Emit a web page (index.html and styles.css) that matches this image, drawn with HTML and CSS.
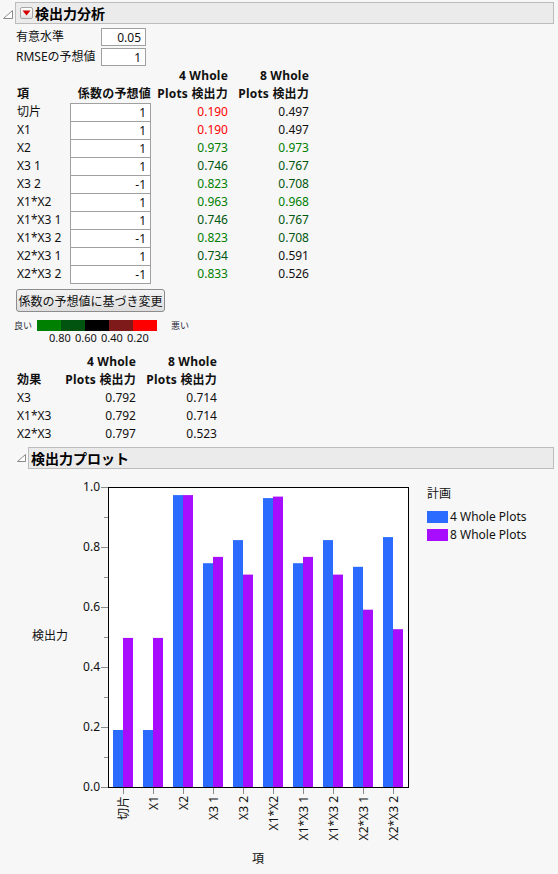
FILE: index.html
```html
<!DOCTYPE html>
<html lang="ja">
<head>
    <meta charset="UTF-8">
    <meta name="viewport" content="width=device-width, initial-scale=1.0">
    <title>検出力分析</title>
    <link rel="stylesheet" href="styles.css">
</head>
<body>
    <div class="outline-head head-main">
        <svg class="disclosure" width="10" height="9" viewBox="0 0 10 9">
            <path d="M9.5 0.5 V8.5 H0.5 Z" fill="#fff" stroke="#8a8a8a"/>
        </svg>
        <div class="title-bar">
            <span class="menu-btn">
                <svg width="9" height="6" viewBox="0 0 9 6"><path d="M0.5 0.5 H8.5 L4.5 5.5 Z" fill="#d40000"/></svg>
            </span>
            <span class="title">検出力分析</span>
        </div>
    </div>

    <div class="outline-body">
        <div class="param">
            <span class="param-label">有意水準</span>
            <input type="text" class="num-input param-input" value="0.05">
        </div>
        <div class="param">
            <span class="param-label">RMSEの予想値</span>
            <input type="text" class="num-input param-input" value="1">
        </div>

        <div class="power-table">
            <div></div><div></div><div class="th num">4 Whole</div><div class="th num">8 Whole</div>
            <div class="th">項</div><div class="th num">係数の予想値</div><div class="th num">Plots 検出力</div><div class="th num">Plots 検出力</div>

            <div>切片</div><input type="text" class="num-input coef" value="1"><div class="num lvl-5">0.190</div><div class="num lvl-3">0.497</div>
            <div>X1</div><input type="text" class="num-input coef" value="1"><div class="num lvl-5">0.190</div><div class="num lvl-3">0.497</div>
            <div>X2</div><input type="text" class="num-input coef" value="1"><div class="num lvl-1">0.973</div><div class="num lvl-1">0.973</div>
            <div>X3 1</div><input type="text" class="num-input coef" value="1"><div class="num lvl-2">0.746</div><div class="num lvl-2">0.767</div>
            <div>X3 2</div><input type="text" class="num-input coef" value="-1"><div class="num lvl-1">0.823</div><div class="num lvl-2">0.708</div>
            <div>X1*X2</div><input type="text" class="num-input coef" value="1"><div class="num lvl-1">0.963</div><div class="num lvl-1">0.968</div>
            <div>X1*X3 1</div><input type="text" class="num-input coef" value="1"><div class="num lvl-2">0.746</div><div class="num lvl-2">0.767</div>
            <div>X1*X3 2</div><input type="text" class="num-input coef" value="-1"><div class="num lvl-1">0.823</div><div class="num lvl-2">0.708</div>
            <div>X2*X3 1</div><input type="text" class="num-input coef" value="1"><div class="num lvl-2">0.734</div><div class="num lvl-3">0.591</div>
            <div>X2*X3 2</div><input type="text" class="num-input coef" value="-1"><div class="num lvl-1">0.833</div><div class="num lvl-3">0.526</div>
        </div>

        <button type="button" class="update-btn">係数の予想値に基づき変更</button>

        <div class="scale">
            <span class="scale-end">良い</span>
            <div class="scale-bar">
                <span class="seg seg-1"></span><span class="seg seg-2"></span><span class="seg seg-3"></span><span class="seg seg-4"></span><span class="seg seg-5"></span>
            </div>
            <span class="scale-end bad">悪い</span>
        </div>
        <div class="scale-labels">
            <span>0.80</span><span>0.60</span><span>0.40</span><span>0.20</span>
        </div>

        <div class="effect-table">
            <div></div><div class="th num">4 Whole</div><div class="th num">8 Whole</div>
            <div class="th">効果</div><div class="th num">Plots 検出力</div><div class="th num">Plots 検出力</div>
            <div>X3</div><div class="num">0.792</div><div class="num">0.714</div>
            <div>X1*X3</div><div class="num">0.792</div><div class="num">0.714</div>
            <div>X2*X3</div><div class="num">0.797</div><div class="num">0.523</div>
        </div>
    </div>

    <div class="outline-head head-sub">
        <svg class="disclosure" width="9" height="8" viewBox="0 0 9 8">
            <path d="M8.5 0.5 V7.5 H0.5 Z" fill="#fff" stroke="#8a8a8a"/>
        </svg>
        <div class="title-bar">
            <span class="title">検出力プロット</span>
        </div>
    </div>

    <svg class="chart" width="558" height="404" viewBox="0 0 558 404">
        <rect x="108" y="18" width="300" height="300" fill="#fff"/>

        <!-- y ticks -->
        <g stroke="#8c8c8c" stroke-width="1">
            <line x1="101" y1="318.5" x2="108" y2="318.5"/>
            <line x1="104" y1="288.5" x2="108" y2="288.5"/>
            <line x1="101" y1="258.5" x2="108" y2="258.5"/>
            <line x1="104" y1="228.5" x2="108" y2="228.5"/>
            <line x1="101" y1="198.5" x2="108" y2="198.5"/>
            <line x1="104" y1="168.5" x2="108" y2="168.5"/>
            <line x1="101" y1="138.5" x2="108" y2="138.5"/>
            <line x1="104" y1="108.5" x2="108" y2="108.5"/>
            <line x1="101" y1="78.5" x2="108" y2="78.5"/>
            <line x1="104" y1="48.5" x2="108" y2="48.5"/>
            <line x1="101" y1="18.5" x2="108" y2="18.5"/>
        </g>
        <g class="tick-text" text-anchor="end">
            <text x="100" y="322">0.0</text>
            <text x="100" y="262">0.2</text>
            <text x="100" y="202">0.4</text>
            <text x="100" y="142">0.6</text>
            <text x="100" y="82">0.8</text>
            <text x="100" y="22">1.0</text>
        </g>

        <!-- bars: 4 Whole Plots / 8 Whole Plots -->
        <g fill="#2b6bff">
            <rect x="113" y="261" width="10" height="57"/>
            <rect x="143" y="261" width="10" height="57"/>
            <rect x="173" y="26.1" width="10" height="291.9"/>
            <rect x="203" y="94.2" width="10" height="223.8"/>
            <rect x="233" y="71.1" width="10" height="246.9"/>
            <rect x="263" y="29.1" width="10" height="288.9"/>
            <rect x="293" y="94.2" width="10" height="223.8"/>
            <rect x="323" y="71.1" width="10" height="246.9"/>
            <rect x="353" y="97.8" width="10" height="220.2"/>
            <rect x="383" y="68.1" width="10" height="249.9"/>
        </g>
        <g fill="#a70dff">
            <rect x="123" y="168.9" width="10" height="149.1"/>
            <rect x="153" y="168.9" width="10" height="149.1"/>
            <rect x="183" y="26.1" width="10" height="291.9"/>
            <rect x="213" y="87.9" width="10" height="230.1"/>
            <rect x="243" y="105.6" width="10" height="212.4"/>
            <rect x="273" y="27.6" width="10" height="290.4"/>
            <rect x="303" y="87.9" width="10" height="230.1"/>
            <rect x="333" y="105.6" width="10" height="212.4"/>
            <rect x="363" y="140.7" width="10" height="177.3"/>
            <rect x="393" y="160.2" width="10" height="157.8"/>
        </g>

        <rect x="108.5" y="18.5" width="300" height="300" fill="none" stroke="#000" stroke-width="1"/>

        <!-- x ticks -->
        <g stroke="#8c8c8c" stroke-width="1">
            <line x1="123.5" y1="319" x2="123.5" y2="325"/>
            <line x1="153.5" y1="319" x2="153.5" y2="325"/>
            <line x1="183.5" y1="319" x2="183.5" y2="325"/>
            <line x1="213.5" y1="319" x2="213.5" y2="325"/>
            <line x1="243.5" y1="319" x2="243.5" y2="325"/>
            <line x1="273.5" y1="319" x2="273.5" y2="325"/>
            <line x1="303.5" y1="319" x2="303.5" y2="325"/>
            <line x1="333.5" y1="319" x2="333.5" y2="325"/>
            <line x1="363.5" y1="319" x2="363.5" y2="325"/>
            <line x1="393.5" y1="319" x2="393.5" y2="325"/>
        </g>
        <g class="tick-text" text-anchor="end">
            <text transform="translate(128,327) rotate(-90)">切片</text>
            <text transform="translate(158,327) rotate(-90)">X1</text>
            <text transform="translate(188,327) rotate(-90)">X2</text>
            <text transform="translate(218,327) rotate(-90)">X3 1</text>
            <text transform="translate(248,327) rotate(-90)">X3 2</text>
            <text transform="translate(278,327) rotate(-90)">X1*X2</text>
            <text transform="translate(308,327) rotate(-90)">X1*X3 1</text>
            <text transform="translate(338,327) rotate(-90)">X1*X3 2</text>
            <text transform="translate(368,327) rotate(-90)">X2*X3 1</text>
            <text transform="translate(398,327) rotate(-90)">X2*X3 2</text>
        </g>

        <text class="axis-title" x="258" y="394" text-anchor="middle">項</text>
        <text class="axis-title" x="32" y="171">検出力</text>

        <!-- legend -->
        <text class="axis-title" x="427" y="29">計画</text>
        <rect x="427" y="42" width="21" height="12" fill="#2b6bff"/>
        <text class="axis-title" x="450" y="52">4 Whole Plots</text>
        <rect x="427" y="60" width="21" height="12" fill="#a70dff"/>
        <text class="axis-title" x="450" y="70">8 Whole Plots</text>
    </svg>
</body>
</html>
```

FILE: styles.css
```css
* {
    margin: 0;
    padding: 0;
    box-sizing: border-box;
}

body {
    font-family: 'Noto Sans', 'Noto Sans CJK JP', sans-serif;
    font-size: 12px;
    line-height: 18px;
    color: #111;
    background: #f7f7f7;
    width: 558px;
    height: 874px;
    overflow: hidden;
}

/* outline headers */
.outline-head {
    display: flex;
    align-items: center;
}

.head-main {
    padding: 2px 0 0 3px;
}

.head-sub {
    margin-top: 4px;
    padding-left: 17px;
}

.disclosure {
    display: block;
    margin-right: 2px;
    flex-shrink: 0;
}

.head-main .disclosure {
    margin-top: 3px;
}

.title-bar {
    display: flex;
    align-items: center;
    height: 22px;
    background: #ebebeb;
    border: 1px solid #bcbcbc;
}

.head-main .title-bar {
    width: 539px;
    padding-left: 4px;
}

.head-sub .title-bar {
    width: 526px;
    padding-left: 2px;
}

.menu-btn {
    display: flex;
    align-items: center;
    justify-content: center;
    width: 13px;
    height: 12px;
    border: 1px solid #a6a6a6;
    border-radius: 2px;
    background: linear-gradient(#ffffff, #e2e2e2);
    margin-right: 2px;
}

.title {
    font-family: 'Noto Sans CJK JP', sans-serif;
    font-size: 14px;
    font-weight: bold;
    line-height: 20px;
    color: #000;
}

/* body */
.outline-body {
    padding-left: 16px;
}

.param {
    display: flex;
    align-items: center;
    height: 18px;
    margin-top: 2px;
}

.param:first-child {
    margin-top: 4px;
}

.param-label {
    width: 85px;
}

.num-input {
    font-family: 'Noto Sans', 'Noto Sans CJK JP', sans-serif;
    font-size: 12px;
    color: #111;
    text-align: right;
    background: #fff;
    border: 1px solid #a0a0a0;
    padding: 0 4px 0 0;
    outline: none;
    border-radius: 0;
}

.param-input {
    width: 45px;
    height: 18px;
}

.power-table {
    display: grid;
    grid-template-columns: 54px 81px 77px 81px;
    grid-auto-rows: 18px;
    margin-top: 1px;
    width: 293px;
}

.power-table > div:nth-child(4n+1) {
    padding-left: 1px;
    white-space: nowrap;
}

.coef {
    width: 81px;
    height: 19px;
}

.th {
    font-weight: bold;
    white-space: nowrap;
    letter-spacing: 0.2px;
}

.num {
    text-align: right;
    white-space: nowrap;
}

.lvl-1 { color: #008000; }
.lvl-2 { color: #00560e; }
.lvl-3 { color: #111; }
.lvl-5 { color: #ff0000; }

.update-btn {
    display: block;
    margin-top: 6px;
    width: 149px;
    height: 23px;
    font-family: 'Noto Sans CJK JP', sans-serif;
    font-size: 12px;
    color: #111;
    border: 1px solid #8c8c8c;
    border-radius: 3px;
    background: linear-gradient(#f4f4f4, #dedede);
    cursor: pointer;
}

/* colour legend */
.scale {
    display: flex;
    align-items: center;
    margin: 8px 0 0 -2px;
    height: 11px;
}

.scale-end {
    font-size: 9px;
    line-height: 11px;
    color: #2a2a3a;
    width: 23px;
}

.scale-end.bad {
    margin-left: 14px;
}

.scale-bar {
    display: flex;
    width: 120px;
    height: 11px;
}

.seg {
    flex: 1;
}

.seg-1 { background: #008000; }
.seg-2 { background: #005410; }
.seg-3 { background: #000000; }
.seg-4 { background: #7f1a1a; }
.seg-5 { background: #ff0000; }

.scale-labels {
    display: flex;
    margin-left: 31px;
    margin-top: 1px;
    font-size: 11px;
    line-height: 12px;
}

.scale-labels span {
    width: 26px;
    text-align: center;
}

.effect-table {
    display: grid;
    grid-template-columns: 40px 80px 81px;
    grid-auto-rows: 18px;
    margin-top: 9px;
    width: 201px;
}

.effect-table > div:nth-child(3n+1) {
    padding-left: 1px;
    white-space: nowrap;
}

/* chart */
.chart {
    display: block;
}

.tick-text text,
.axis-title {
    font-family: 'Noto Sans', 'Noto Sans CJK JP', sans-serif;
    font-size: 12px;
    fill: #111;
}
```
